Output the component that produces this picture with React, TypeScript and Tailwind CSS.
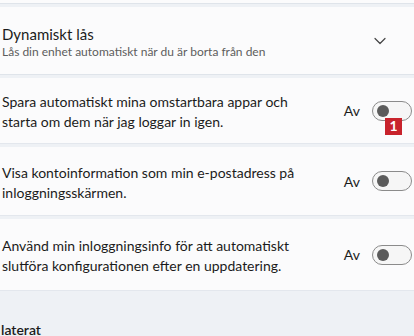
import React from "react";

function Toggle({ badge }: { badge?: boolean }) {
  return (
    <div className="relative">
      <div className="flex h-[20px] w-[40px] items-center rounded-full border border-[#8b8b8b] bg-[#f6f6f6] px-[4px]">
        <div className="h-[12px] w-[12px] rounded-full bg-[#5b5b5b]" />
      </div>
      {badge && (
        <div className="absolute left-[13px] top-[17px] flex h-[17px] w-[17px] items-center justify-center bg-[#c8232c] text-[14px] font-bold leading-none text-white">
          1
        </div>
      )}
    </div>
  );
}

function ToggleRow({ lines, badge, h }: { lines: string[]; badge?: boolean; h: string }) {
  return (
    <div className={`flex ${h} shrink-0 items-center justify-between border-b border-[#e3e7ed] bg-[#fbfbfc] pl-[2px] pr-[2px]`}>
      <div className="pt-[3px] text-[14px] leading-[20px] text-[#1b1b1b]">
        {lines.map((l) => (
          <div key={l}>{l}</div>
        ))}
      </div>
      <div className="flex items-center gap-[12px]">
        <span className="text-[14px] text-[#1b1b1b]">Av</span>
        <Toggle badge={badge} />
      </div>
    </div>
  );
}

export default function App() {
  return (
    <div
      className="flex h-[336px] w-[414px] flex-col gap-[3px] overflow-hidden bg-[#eef1f5]"
      style={{ fontFamily: 'Lato, "Noto Sans", sans-serif' }}
    >
      {/* card cut off at the top */}
      <div className="h-[4px] shrink-0 border-b border-[#dfe4ea] bg-[#fbfbfc]" />

      <div className="flex h-[68px] shrink-0 items-center justify-between border-b border-[#dfe4ea] bg-[#fbfbfc] pl-[2px] pr-[28px]">
        <div className="pt-[4px]">
          <div className="text-[15px] leading-[19px] text-[#1b1b1b]">Dynamiskt lås</div>
          <div className="text-[12px] leading-[16px] text-[#5d5d5d]">
            Lås din enhet automatiskt när du är borta från den
          </div>
        </div>
        <svg width="12" height="8" viewBox="0 0 12 8" fill="none">
          <path d="M1 1.5l5 5 5-5" stroke="#444" strokeWidth="1.2" strokeLinecap="round" strokeLinejoin="round" />
        </svg>
      </div>

      <ToggleRow
        h="h-[66px]"
        lines={["Spara automatiskt mina omstartbara appar och", "starta om dem när jag loggar in igen."]}
        badge
      />
      <ToggleRow h="h-[69px]" lines={["Visa kontoinformation som min e-postadress på", "inloggningsskärmen."]} />
      <ToggleRow
        h="h-[72px]"
        lines={["Använd min inloggningsinfo för att automatiskt", "slutföra konfigurationen efter en uppdatering."]}
      />

      <div className="mt-[25px] pl-[1px] text-[14px] font-semibold text-[#1b1b1b]">laterat</div>
    </div>
  );
}
